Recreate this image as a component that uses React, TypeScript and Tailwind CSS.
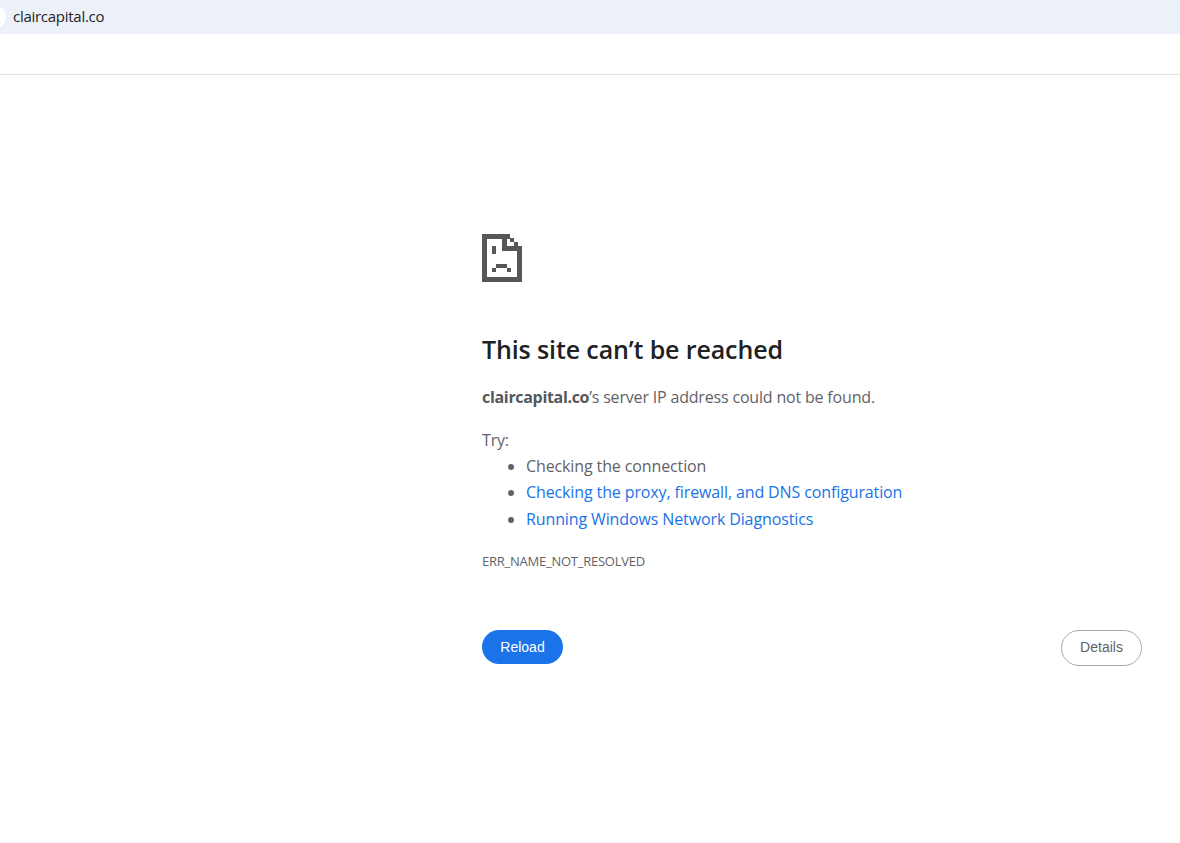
const font = "font-['Open_Sans','Noto_Sans',sans-serif]";

function SadTab() {
  return (
    <svg width="40" height="48" viewBox="0 0 40 48" fill="#555759" shapeRendering="crispEdges">
      <rect x="0" y="0" width="28" height="5" />
      <rect x="0" y="0" width="5" height="48" />
      <rect x="0" y="43" width="40" height="5" />
      <rect x="35" y="12" width="5" height="36" />
      <rect x="20" y="0" width="5" height="17" />
      <rect x="20" y="12" width="20" height="5" />
      <rect x="28" y="4" width="4" height="4" />
      <rect x="32" y="8" width="4" height="4" />
      <rect x="10" y="12" width="4" height="8" />
      <rect x="14" y="30" width="11" height="4" />
      <rect x="10" y="34" width="4" height="4" />
      <rect x="25" y="34" width="4" height="4" />
    </svg>
  );
}

const items = [
  { text: "Checking the connection", link: false },
  { text: "Checking the proxy, firewall, and DNS configuration", link: true },
  { text: "Running Windows Network Diagnostics", link: true },
];

export default function App() {
  return (
    <div className={`h-[843px] w-[1180px] overflow-hidden bg-white ${font}`}>
      <div className="flex h-[34px] items-center overflow-hidden bg-[#ebf0f9]">
        <div className="-ml-[18px] mr-[7px] h-6 w-6 shrink-0 rounded-full bg-white" />
        <span className="-mt-[2px] text-[15px] tracking-[-0.27px] text-[#1f1f1f]">claircapital.co</span>
      </div>
      <div className="h-[41px] border-b border-[#e0e0e0]" />
      <main className="pl-[482px] pr-[38px] pt-[159px]">
        <SadTab />
        <h1 className="mt-[49px] text-[25px] leading-[36px] font-semibold tracking-[-0.12px] text-[#202124]">
          This site can’t be reached
        </h1>
        <p className="mt-[18px] text-[16px] leading-[24px] tracking-[-0.18px] text-[#5f6368]">
          <strong className="font-bold tracking-[-0.32px] text-[#55585c]">claircapital.co</strong>’s server IP address could not be found.
        </p>
        <p className="mt-[19px] text-[16px] leading-[24px] tracking-[-0.18px] text-[#5f6368]">Try:</p>
        <ul className="mt-[1px] list-disc pl-[44px] text-[16px] leading-[26.4px] tracking-[-0.12px] text-[#5f6368] marker:text-[#5f6368]">
          {items.map((item) => (
            <li key={item.text} className={item.link ? "text-[#1a73e8]" : ""}>
              {item.text}
            </li>
          ))}
        </ul>
        <div className="mt-[19.3px] text-[13px] leading-[18px] tracking-[-0.24px] text-[#5f6368]">ERR_NAME_NOT_RESOLVED</div>
        <div className="mt-[60px] flex items-start justify-between font-['Liberation_Sans',sans-serif] text-[14px]">
          <button className="h-[34px] w-[81px] rounded-full bg-[#1a73e8] pt-px text-white">Reload</button>
          <button className="h-[36px] w-[81px] rounded-full border border-[#a8a9ab] bg-white text-[#5f6368]">Details</button>
        </div>
      </main>
    </div>
  );
}
